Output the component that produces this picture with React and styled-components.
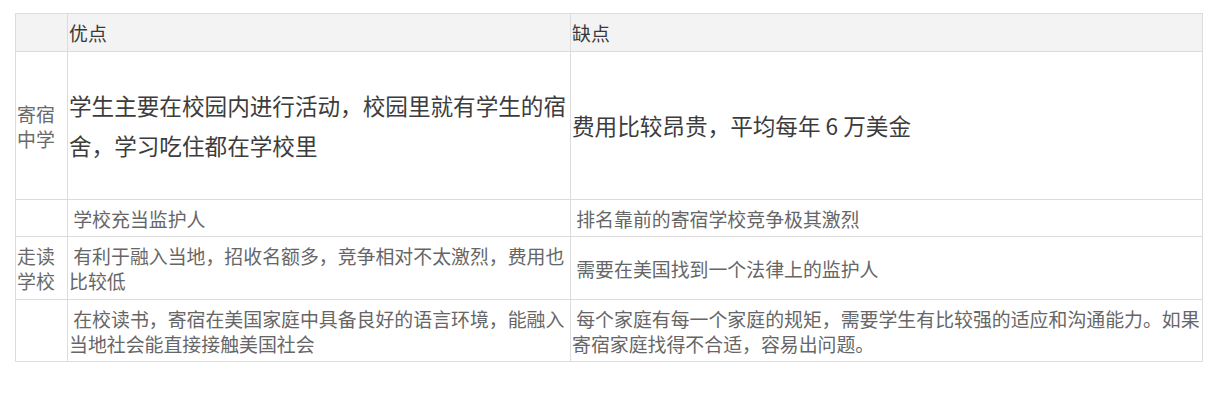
import React from 'react';
import styled, { createGlobalStyle } from 'styled-components';

const GlobalStyle = createGlobalStyle`
  html,
  body {
    margin: 0;
    padding: 0;
    background: #fff;
  }

  body {
    font-family: 'Noto Sans CJK SC', 'Noto Sans', sans-serif;
    color: #555;
  }
`;

const rows = [
  {
    label: '寄宿中学',
    pros: '学生主要在校园内进行活动，校园里就有学生的宿舍，学习吃住都在学校里',
    cons: '费用比较昂贵，平均每年 6 万美金',
    height: 147,
    large: true,
  },
  {
    label: '',
    pros: '\u00a0学校充当监护人',
    cons: '\u00a0排名靠前的寄宿学校竞争极其激烈',
    height: 36,
  },
  {
    label: '走读学校',
    pros: '\u00a0有利于融入当地，招收名额多，竞争相对不太激烈，费用也比较低',
    cons: '\u00a0需要在美国找到一个法律上的监护人',
    height: 62,
  },
  {
    label: '',
    pros: '\u00a0在校读书，寄宿在美国家庭中具备良好的语言环境，能融入当地社会能直接接触美国社会',
    cons: '\u00a0每个家庭有每一个家庭的规矩，需要学生有比较强的适应和沟通能力。如果寄宿家庭找得不合适，容易出问题。',
    height: 61,
  },
];

const App = () => {
  return (
    <>
      <GlobalStyle />
      <Page>
        <Table>
          <colgroup>
            <col style={{ width: 52 }} />
            <col style={{ width: 503 }} />
            <col style={{ width: 632 }} />
          </colgroup>
          <thead>
            <tr>
              <HeadCell />
              <HeadCell>优点</HeadCell>
              <HeadCell>缺点</HeadCell>
            </tr>
          </thead>
          <tbody>
            {rows.map((row, i) => (
              <tr key={i}>
                <LabelCell $height={row.height}>{row.label}</LabelCell>
                <Cell $height={row.height} $large={row.large}>
                  {row.pros}
                </Cell>
                <Cell $height={row.height} $large={row.large}>
                  {row.cons}
                </Cell>
              </tr>
            ))}
          </tbody>
        </Table>
      </Page>
    </>
  );
};

const Page = styled.div`
  padding: 13px 0 50px 15px;
`;

const Table = styled.table`
  width: 1187px;
  table-layout: fixed;
  border-collapse: collapse;
  border: 1px solid #dcdcdc;
`;

const HeadCell = styled.th`
  height: 37px;
  padding: 0 1px;
  border: 1px solid #dcdcdc;
  background: #f3f3f3;
  color: #3a3a3a;
  font-size: 18.9px;
  font-weight: 400;
  line-height: 25px;
  text-align: left;
  vertical-align: middle;
`;

const Cell = styled.td`
  height: ${(p) => p.$height}px;
  padding: 0 1px;
  border: 1px solid #dcdcdc;
  color: ${(p) => (p.$large ? '#3c3c3c' : '#666')};
  font-size: ${(p) => (p.$large ? '22.6px' : '18.9px')};
  line-height: ${(p) => (p.$large ? '40px' : '25px')};
  vertical-align: middle;
  word-break: break-all;
`;

const LabelCell = styled(Cell)`
  color: #6a6a6a;
  font-size: 18.9px;
  line-height: 25px;
`;

export default App;
